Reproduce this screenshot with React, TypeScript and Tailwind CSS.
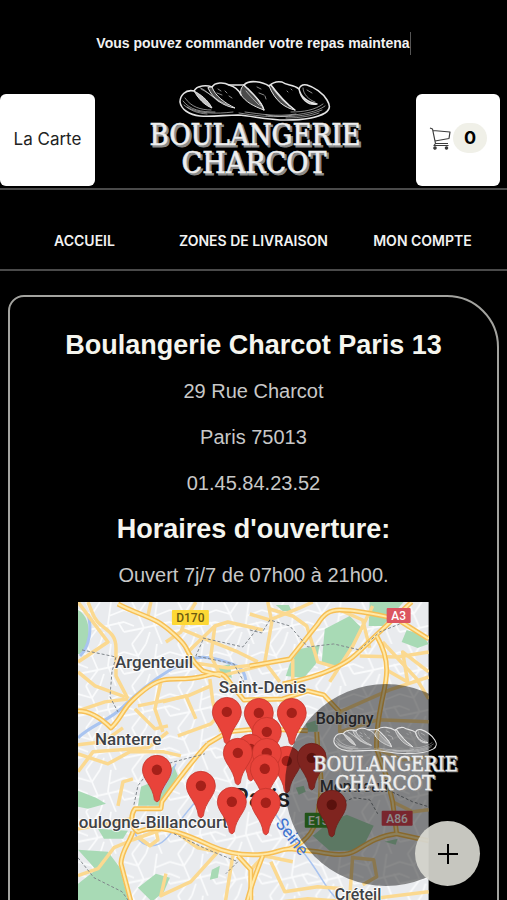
import React from "react";

const majorRoads = [
  "M40 2 C55 10 70 14 80 20 S103 38 107 44 S112 58 125 69 L143 74",
  "M0 109 C10 109 20 113 33 126 C42 118 45 108 53 100 S75 80 86 78 S108 79 127 74 S146 72 153 82 L166 98 L205 97 L230 89 L246 93 L262 110",
  "M172 64 L212 57 L240 22 C246 12 252 8 262 8 S289 10 319 17 L351 37",
  "M205 82 C225 78 240 74 255 67 S276 55 285 46 L305 27 L334 0",
  "M299 34 C306 46 309 56 309 68 S306 90 304 100 S298 130 299 147 L309 175 L315 200 L319 232",
  "M130 142 C115 158 100 178 84 200 L83 207 L57 207 C52 214 53 226 60 230 C70 226 80 226 90 228 S120 238 133 244 S160 254 180 253 S198 248 212 247 L240 250 C255 253 268 255 278 249 S300 234 319 232 L351 239",
  "M55 230 C52 240 43 250 43 262 L53 300 L60 340",
  "M160 254 L173 268 L173 340",
  "M185 254 C178 272 170 290 160 340",
  "M239 130 C240 160 247 180 241 205 C240 225 230 240 212 247",
  "M130 142 L150 130 L180 127 L230 129",
];

const minorRoads = [
  "M10 0 C14 10 16 18 24 24 S38 34 38 46 V74 L50 97",
  "M73 0 L70 14",
  "M0 70 L17 84 L47 95",
  "M0 109 L27 100 L50 97",
  "M88 40 L103 30 L108 17 L118 0",
  "M103 27 L127 37 L160 50 L180 60",
  "M110 50 L137 24 L150 20 L185 28",
  "M83 80 L77 107 L85 130",
  "M57 107 L70 120 L77 127 L90 124",
  "M100 134 L133 122 L147 107",
  "M132 77 L135 100 L143 130",
  "M137 24 L133 54 L143 74 L190 62",
  "M110 60 L150 66 L186 62",
  "M60 104 L110 94 L133 84",
  "M85 100 L108 94 L118 117",
  "M190 0 L194 20 L187 60 L202 80",
  "M192 7 L215 14 L229 24 L240 60 L260 66",
  "M172 12 L192 18 L222 6 L235 0",
  "M215 57 V80",
  "M295 4 L275 44 L252 80",
  "M262 8 L285 18 L292 46",
  "M282 54 L320 55 L351 50",
  "M305 40 L339 77 L351 97",
  "M309 68 L330 80 L325 50 L351 70",
  "M246 93 L262 110 L312 88 L351 75",
  "M262 110 L262 130 L300 118 L351 120",
  "M0 152 L30 162 L52 150 L86 150 L103 154",
  "M0 143 L25 140 L45 126",
  "M0 170 L15 150 L70 146 L90 130",
  "M40 204 L45 180 L55 177",
  "M0 227 L30 222 L53 217",
  "M0 274 L20 267 L36 246 L55 238 L83 228",
  "M60 235 L72 244 L80 238 L78 228",
  "M103 234 L120 246 L140 250 L113 280 L83 294 L88 272",
  "M155 254 L148 297 L144 340",
  "M173 268 L186 254 L215 260",
  "M193 260 L207 290 L240 285 L265 287",
  "M275 254 L272 297 L262 340",
  "M276 256 L296 258 L299 275 L285 283",
  "M205 300 L230 297 L270 300 L351 290",
  "M299 147 L325 158 L351 155",
  "M315 200 L335 210 L351 208",
  "M0 0 L30 40 L0 60",
];

const parks = [
  "M0 8 C8 12 13 24 10 38 C8 48 2 53 0 52Z",
  "M247 27 L272 14 L285 27 L275 44 L258 66 L244 60Z",
  "M222 47 L242 43 L238 62 L226 76 L208 74 L212 62Z",
  "M292 0 L326 0 L305 24 L291 24Z",
  "M329 28 L345 33 L351 42 L340 46 L324 40Z",
  "M198 3 L211 3 L214 9 L205 9Z",
  "M138 66 L152 62 L154 76 L143 72Z",
  "M60 204 L63 185 L80 178 L96 164 L100 174 L82 204Z",
  "M0 189 L18 196 L28 202 L10 207 L0 205Z",
  "M20 227 L50 229 L45 237 L26 237Z",
  "M0 248 L30 250 L42 266 L50 297 L54 340 L0 340 L0 282 L18 268Z",
  "M60 286 L78 272 L92 276 L86 290 L74 300Z",
  "M134 268 L142 264 L140 276 L132 278Z",
  "M235 234 L252 220 L269 213 L296 224 L286 244 L274 249 L252 249Z",
  "M218 186 L226 184 L228 190 L221 193Z",
  "M228 122 L240 118 L240 130 L230 130Z",
  "M307 240 L320 237 L318 243Z",
];

const dashes =
  "M4 48 L38 55 L34 70 L32 95 L40 110 M125 38 L118 54 L156 62 L166 80 M125 36 L165 45 L180 26 M172 28 L184 31 L192 18 L212 24 L230 45 L256 42 L282 48 L302 30 L322 22 M56 203 L60 184 L72 168 L96 160 L127 152 M96 232 L130 248 L160 260 L148 272 M0 256 L16 276 L44 290 L60 312 M262 202 L276 196 L292 198 L300 212 M310 188 L335 200 L351 205";

const cities = [
  { name: "Argenteuil", x: 37, y: 66, size: 17 },
  { name: "Nanterre", x: 17, y: 143, size: 17 },
  { name: "Saint-Denis", x: 141, y: 91, size: 17 },
  { name: "Bobigny", x: 238, y: 122, size: 16 },
  { name: "Boulogne-Billancourt", x: -10, y: 226, size: 17 },
  { name: "Montreuil", x: 242, y: 190, size: 16 },
  { name: "Créteil", x: 257, y: 298, size: 16 },
];

const roadSigns = [
  { name: "D170", x: 94, y: 8, w: 37, bg: "#fdd835", fg: "#6b5a10" },
  { name: "A3", x: 309, y: 6, w: 24, bg: "#dc5560", fg: "#ffffff" },
  { name: "E15", x: 227, y: 211, w: 27, bg: "#3f9a2c", fg: "#ffffff" },
  { name: "A86", x: 304, y: 209, w: 31, bg: "#dc4555", fg: "#ffffff" },
];

const pins = [
  [149, 110],
  [181, 111],
  [214, 111],
  [189, 130],
  [173, 147],
  [209, 159],
  [234, 156],
  [189, 151],
  [160, 151],
  [187, 167],
  [79, 168],
  [123, 184],
  [154, 200],
  [188, 201],
  [254, 203],
];

const Logo = ({ className }: { className: string }) => (
  <svg viewBox="0 0 230 115" className={className} role="img" aria-label="Boulangerie Charcot">
    <g fill="none" stroke="#e4e4e4" strokeLinecap="round" strokeLinejoin="round">
      <path
        strokeWidth="1.6"
        d="M53 20 C44 18 39 25 39 31 C40 38 48 44 59 45 C72 46 84 44 97 44 C112 45 126 49 145 49 C160 49 176 47 184 42 C190 38 189 34 186 29 C182 22 173 16 166 14 C161 13 159 15 158 18 C152 13 146 15 141 11 C136 10 131 12 128 15 C122 11 108 8 103 14 C96 14 92 14 88 14 C83 11 74 11 71 16 C66 14 56 14 53 20Z"
      />
      <path
        strokeWidth="1"
        fill="#d8d8d8"
        fillOpacity="0.35"
        d="M71 16 C74 25 84 32 94 37 C82 35 72 28 67 17Z M103 14 C108 20 120 28 123 39 C112 35 105 31 100 24 C99 20 100 16 103 14Z M130 14 C136 22 144 32 154 39 C144 37 134 30 128 15Z"
      />
      <path strokeWidth="1" fill="#c4c4c4" d="M53 20 C59 23 67 29 71 37 C63 34 57 27 53 20Z" />
      <path
        strokeWidth="1.4"
        d="M88 14 C95 16 98 19 100 24 M158 18 C160 27 166 31 176 33 C167 35 160 28 158 18 M130 14 C136 22 144 32 154 39 M103 14 C108 20 120 28 123 39"
      />
      <path
        strokeWidth="0.8"
        opacity="0.75"
        d="M42 30 C49 39 60 41 74 41 M44 27 C50 36 60 39 70 39 M46 36 C57 43 75 43 92 41 M60 18 C70 23 76 30 87 34 M58 16 C65 19 70 25 78 31 M43 34 C50 40 56 42 66 43 M98 42 C112 44 128 47 145 45 S176 41 184 35 M104 41 C120 43 135 46 155 43 M125 44 C145 47 165 46 181 39 M150 41 C163 41 174 39 182 33 M107 17 C114 24 117 30 120 35 M105 20 C110 26 114 30 118 34 M132 18 C138 25 142 31 149 35 M162 17 C162 23 168 29 174 31 M145 47 C160 47 170 45 178 42 M166 19 L171 22 M77 18 L80 20 M76 22 L81 24 M84 20 L86 22 M88 25 L91 27 M116 16 L120 18 M118 22 L123 24 M124 25 L125 28 M146 20 L147 21 M150 18 L151 19"
      />
    </g>
    <g fontFamily="'DejaVu Serif Condensed', 'DejaVu Serif', serif" fontStretch="condensed" textAnchor="middle">
      <g fill="#8c8c8c" stroke="#8c8c8c" strokeWidth="1">
        <text x="116" y="76" fontSize="29">BOULANGERIE</text>
        <text x="115" y="104" fontSize="30">CHARCOT</text>
      </g>
      <g fill="#eeeeee" stroke="#eeeeee" strokeWidth="0.6">
        <text x="114" y="74" fontSize="29">BOULANGERIE</text>
        <text x="113" y="102" fontSize="30">CHARCOT</text>
      </g>
    </g>
  </svg>
);

const CartIcon = () => (
  <svg viewBox="0 0 22 24" className="h-6 w-[22px]" fill="none" stroke="#3c3c3c" strokeWidth="1.2" strokeLinejoin="round">
    <path d="M1 2 L3.500 3 L6.500 17.500 M4 4.500 L21 6 L20 12.500 L6 15 M6.500 17.500 L5 19.500 H19.500 M6.500 17.500 H19" />
    <circle cx="6" cy="22" r="1.200" fill="#3c3c3c" />
    <circle cx="17.500" cy="22" r="1.200" fill="#3c3c3c" />
  </svg>
);

const StoreMap = () => (
  <svg viewBox="0 0 351 340" className="block w-full" role="img" aria-label="Carte des boutiques">
    <defs>
      <pattern id="streets" width="46" height="42" patternUnits="userSpaceOnUse">
        <rect width="46" height="42" fill="#e9ebee" />
        <path
          d="M0 8 L14 12 L22 0 M14 12 L20 26 L46 20 M20 26 L8 42 M0 30 L20 26 M33 0 L30 22 L38 42 M46 8 L31 14 M22 42 L26 30 M0 20 L10 24 M40 20 L46 30 M8 0 L14 12"
          fill="none"
          stroke="#fafbfc"
          strokeWidth="1.8"
        />
      </pattern>
    </defs>
    <rect width="351" height="340" fill="url(#streets)" />
    {parks.map((d) => (
      <path key={d} d={d} fill="#a8dab5" />
    ))}
    <g fill="none" stroke="#a9c4f0" strokeWidth="3">
      <path d="M0 136 C12 124 32 118 44 106 S72 80 92 68 S122 52 142 58 S166 66 168 78" />
      <path d="M10 12 C14 26 12 44 2 54" />
      <path d="M98 162 C92 176 88 182 84 190 M55 210 C52 232 62 244 74 244 S94 230 100 222 S112 206 118 200" strokeWidth="1.5" />
      <path d="M190 200 C205 225 222 245 234 262 S250 290 262 300" strokeWidth="1.5" />
    </g>
    <g fill="none" stroke="#fbd990" strokeWidth="3.500" strokeLinejoin="round">
      {minorRoads.map((d) => (
        <path key={d} d={d} />
      ))}
    </g>
    <g fill="none" stroke="#f7bf55" strokeWidth="5" strokeLinejoin="round">
      {majorRoads.map((d) => (
        <path key={d} d={d} />
      ))}
    </g>
    <g fill="none" stroke="#ffe9a8" strokeWidth="2" strokeLinejoin="round">
      {majorRoads.map((d) => (
        <path key={d} d={d} />
      ))}
    </g>
    <path d={dashes} fill="none" stroke="#80868b" strokeWidth="1" strokeDasharray="3 2" />

    <g fontFamily="Roboto, sans-serif" fontWeight="500">
      {roadSigns.map((s) => (
        <g key={s.name}>
          <rect x={s.x} y={s.y} width={s.w} height="15" rx="1" fill={s.bg} />
          <text x={s.x + s.w / 2} y={s.y + 12} fontSize="12" fill={s.fg} textAnchor="middle">
            {s.name}
          </text>
        </g>
      ))}
      <g fill="#3f4246" stroke="#ffffff" strokeOpacity="0.8" strokeWidth="2" strokeLinejoin="round" paintOrder="stroke">
        {cities.map((c) => (
          <text key={c.name} x={c.x} y={c.y} fontSize={c.size}>
            {c.name}
          </text>
        ))}
      </g>
      <text x="155" y="205" fontSize="25" fontWeight="500" fill="#222427">
        Paris
      </text>
      <text transform="translate(197 222) rotate(52)" fontSize="17" fontWeight="400" fill="#3f73cf">
        Seine
      </text>
    </g>

    {pins.map(([x, y]) => (
      <g key={`${x}-${y}`} transform={`translate(${x} ${y})`}>
        <path
          d="M0 -14.500 A14.500 14.500 0 0 1 14.500 0 C14.500 10 4 16 2.500 30 Q0 34 -2.500 30 C-4 16 -14.500 10 -14.500 0 A14.500 14.500 0 0 1 0 -14.500Z"
          fill="#e8433a"
          stroke="#c5352c"
          strokeWidth="0.8"
        />
        <circle r="5.200" fill="#a52019" />
      </g>
    ))}
  </svg>
);

const App = () => {
  return (
    <div className="relative h-screen overflow-hidden bg-black font-['Inter',sans-serif] text-white">
      <header>
        <p className="flex justify-center pt-8 pb-4 font-['Liberation_Sans',sans-serif] text-[14px] leading-[23px] font-bold text-[#f2f2f2]">
          <span className="border-r border-[#555]">Vous pouvez commander votre repas maintena</span>
        </p>
        <div className="flex items-end justify-between border-b-2 border-[#4a4a4a] pr-[7px] pb-0.5">
          <button className="h-[92px] w-[95px] rounded-md bg-white text-[17px] text-[#222]">La Carte</button>
          <Logo className="w-[230px]" />
          <button aria-label="Panier" className="flex h-[92px] w-[84px] items-center justify-center gap-0.5 rounded-md bg-white pb-1">
            <CartIcon />
            <span className="w-[34px] rounded-full bg-[#f0f0e8] text-lg leading-[30px] font-bold text-black">0</span>
          </button>
        </div>
        <nav className="grid grid-cols-3 border-b-2 border-[#4a4a4a] pt-[41px] pb-[18px] text-center text-[14px] leading-5 font-semibold text-[#f2f2f2]">
          <a href="#accueil">ACCUEIL</a>
          <a href="#zones">ZONES DE LIVRAISON</a>
          <a href="#compte">MON COMPTE</a>
        </nav>
      </header>

      <main className="mx-2 mt-6 flex flex-col items-center gap-3 rounded-tl-2xl rounded-tr-[52px] border-2 border-[#a3a39f] pt-[33px] pb-8">
        <div className="flex flex-col gap-4 text-center font-['Liberation_Sans',sans-serif] text-[20px] leading-[30px] text-[#c8c8c8]">
          <h1 className="text-[27px] font-bold text-[#f5f5ee]">Boulangerie Charcot Paris 13</h1>
          <p>29 Rue Charcot</p>
          <p>Paris 75013</p>
          <p>01.45.84.23.52</p>
          <h2 className="text-[27px] font-bold text-[#f5f5ee]">Horaires d'ouverture:</h2>
          <p>Ouvert 7j/7 de 07h00 à 21h00.</p>
        </div>
        <div className="w-[72%]">
          <StoreMap />
        </div>
      </main>

      <div className="absolute right-5 bottom-3.5 flex h-[202px] w-[202px] items-center justify-center rounded-full bg-black/45 pb-[52px]">
        <Logo className="w-[158px] shrink-0" />
      </div>
      <button
        aria-label="Ouvrir le menu"
        className="absolute right-[27px] bottom-3.5 flex h-[65px] w-[65px] items-center justify-center rounded-full bg-[#dcdcd4]/90"
      >
        <svg viewBox="0 0 20 20" className="h-5 w-5" stroke="#000" strokeWidth="2">
          <path d="M10 0 V20 M0 10 H20" />
        </svg>
      </button>
    </div>
  );
};

export default App;
